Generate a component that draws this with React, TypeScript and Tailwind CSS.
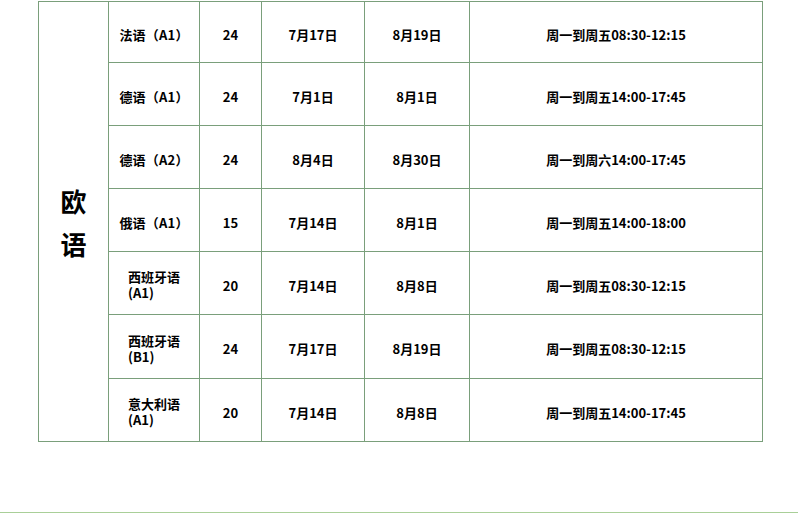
import React from "react";

const rows: { name: string; wrap?: [string, string]; n: string; s: string; e: string; t: string }[] = [
  { name: "法语（A1）", n: "24", s: "7月17日", e: "8月19日", t: "周一到周五08:30-12:15" },
  { name: "德语（A1）", n: "24", s: "7月1日", e: "8月1日", t: "周一到周五14:00-17:45" },
  { name: "德语（A2）", n: "24", s: "8月4日", e: "8月30日", t: "周一到周六14:00-17:45" },
  { name: "俄语（A1）", n: "15", s: "7月14日", e: "8月1日", t: "周一到周五14:00-18:00" },
  { name: "", wrap: ["西班牙语", "(A1)"], n: "20", s: "7月14日", e: "8月8日", t: "周一到周五08:30-12:15" },
  { name: "", wrap: ["西班牙语", "(B1)"], n: "24", s: "7月17日", e: "8月19日", t: "周一到周五08:30-12:15" },
  { name: "", wrap: ["意大利语", "(A1)"], n: "20", s: "7月14日", e: "8月8日", t: "周一到周五14:00-17:45" },
];

const cell = "border-r border-b border-[#7a9f7b] flex items-center justify-center pt-[4px]";

export default function App() {
  return (
    <div
      className="h-[513px] w-[798px] bg-white border-b border-[#a9cf98] text-black font-bold overflow-hidden"
      style={{ fontFamily: '"Noto Sans CJK SC", "Noto Sans", sans-serif' }}
    >
      <div className="pl-[38px] pt-[1px]">
        <div className="grid grid-cols-[70px_91px_62px_103px_105px_293px] grid-rows-[61px_63px_63px_63px_63px_64px_63px] w-[725px] border-l border-t border-[#7a9f7b] text-[13px] leading-[17px]">
          <div className="row-span-7 border-r border-b border-[#7a9f7b] flex items-center justify-center">
            <div className="text-[26px] leading-[43px] w-[26px] text-center">欧<br />语</div>
          </div>
          {rows.map((r, i) => (
            <React.Fragment key={i}>
              <div className={cell}>
                {r.wrap ? (
                  <div className="text-left leading-[16px]">
                    {r.wrap[0]}
                    <br />
                    {r.wrap[1]}
                  </div>
                ) : (
                  <span className="tracking-[0.2px]">{r.name}</span>
                )}
              </div>
              <div className={cell}>{r.n}</div>
              <div className={cell}>{r.s}</div>
              <div className={cell}>{r.e}</div>
              <div className={cell}>{r.t}</div>
            </React.Fragment>
          ))}
        </div>
      </div>
    </div>
  );
}
